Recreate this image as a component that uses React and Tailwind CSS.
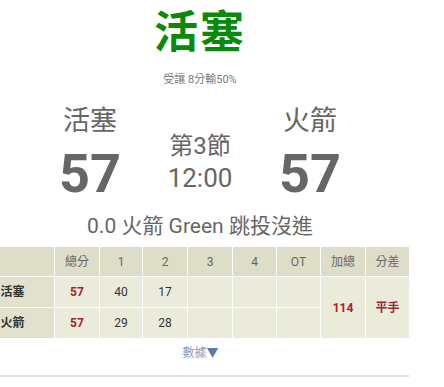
import React from "react";

const font = { fontFamily: "Roboto, 'Noto Sans CJK TC', sans-serif" };

const quarters = ["1", "2", "3", "4", "OT"];
const rows = [
  { team: "活塞", total: 57, q: ["40", "17", "", "", ""] },
  { team: "火箭", total: 57, q: ["29", "28", "", "", ""] },
];

const App = () => {
  return (
    <div
      className="w-[444px] h-[387px] bg-white overflow-hidden text-[#666]"
      style={font}
    >
      {/* 標題 */}
      <div className="w-[400px] flex flex-col items-center">
        <div className="mt-[11px] text-[44px] leading-[44px] font-bold text-[#0a8a0a] tracking-[2px]">
          活塞
        </div>
        <div className="mt-[17px] text-[11px] leading-[16px] text-[#777]">
          受讓 8分輸50%
        </div>

        {/* 比分 */}
        <div className="mt-[17px] w-full flex justify-center items-start">
          <div className="w-[110px] flex flex-col items-center">
            <div className="text-[27px] leading-[32px]">活塞</div>
            <div className="mt-[10px] text-[54px] leading-[54px] font-bold">57</div>
          </div>
          <div className="w-[110px] flex flex-col items-center pt-[27px]">
            <div className="text-[24px] leading-[28px]">第3節</div>
            <div className="mt-[3px] text-[26px] leading-[30px]">12:00</div>
          </div>
          <div className="w-[110px] flex flex-col items-center">
            <div className="text-[27px] leading-[32px]">火箭</div>
            <div className="mt-[10px] text-[54px] leading-[54px] font-bold">57</div>
          </div>
        </div>

        <div className="mt-[12px] text-[21px] leading-[26px]">
          0.0 火箭 Green 跳投沒進
        </div>
      </div>

      {/* 數據表 */}
      <div className="mt-[7px] ml-[-30px] w-[439px]">
        <table className="w-full table-fixed border-collapse border border-[#dcdcd4] text-[12px] text-[#333] text-center">
          <colgroup>
            <col className="w-[84px]" />
            <col className="w-[45px]" />
            <col className="w-[43px]" />
            <col className="w-[45px]" />
            <col className="w-[45px]" />
            <col className="w-[44px]" />
            <col className="w-[44px]" />
            <col className="w-[45px]" />
            <col className="w-[44px]" />
          </colgroup>
          <thead>
            <tr className="h-[30px] bg-[#deddc8] text-[#666]">
              <th className="border border-white font-normal"></th>
              <th className="border border-white font-normal">總分</th>
              {quarters.map((q) => (
                <th key={q} className="border border-white font-normal">
                  {q}
                </th>
              ))}
              <th className="border border-white font-normal">加總</th>
              <th className="border border-white font-normal">分差</th>
            </tr>
          </thead>
          <tbody>
            {rows.map((row, i) => (
              <tr key={row.team} className="h-[31px] bg-[#ebebdc]">
                <td className="border border-white bg-[#e2e1cd] font-bold">
                  {row.team}
                </td>
                <td className="border border-white font-bold text-[#a3232f]">
                  {row.total}
                </td>
                {row.q.map((v, j) => (
                  <td key={j} className="border border-white">
                    {v}
                  </td>
                ))}
                {i === 0 && (
                  <>
                    <td
                      rowSpan={2}
                      className="border border-white font-bold text-[#a3232f]"
                    >
                      114
                    </td>
                    <td
                      rowSpan={2}
                      className="border border-white font-bold text-[#a3232f]"
                    >
                      平手
                    </td>
                  </>
                )}
              </tr>
            ))}
          </tbody>
        </table>
      </div>

      <div className="w-[409px] flex justify-center pt-[6px] pb-[14px]">
        <span className="ml-[-8px] text-[12px] leading-[16px] text-[#8a9bb5]">
          數據<span className="text-[#5b7bab]">▼</span>
        </span>
      </div>
      <div className="w-[409px] h-[2px] bg-[#e2e2e2]"></div>
    </div>
  );
};

export default App;
